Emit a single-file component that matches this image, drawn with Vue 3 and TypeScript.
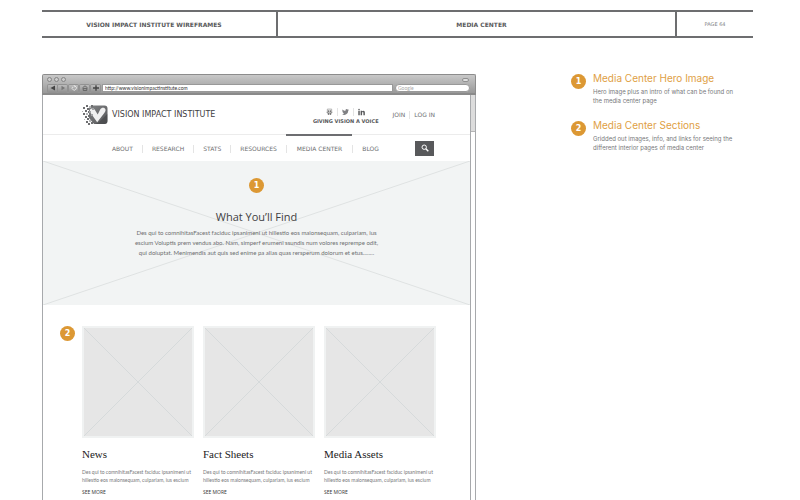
<script setup lang="ts">
import { ref } from 'vue'

interface Note {
  id: number
  title: string
  lines: string[]
}

interface NavItem {
  label: string
  active?: boolean
}

const address = ref('http://www.visionimpactinstitute.com')
const query = ref('')

const navItems: NavItem[] = [
  { label: 'ABOUT' },
  { label: 'RESEARCH' },
  { label: 'STATS' },
  { label: 'RESOURCES' },
  { label: 'MEDIA CENTER', active: true },
  { label: 'BLOG' },
]

const sections: string[] = ['News', 'Fact Sheets', 'Media Assets']

const notes: Note[] = [
  {
    id: 1,
    title: 'Media Center Hero Image',
    lines: ['Hero image plus an intro of what can be found on', 'the media center page'],
  },
  {
    id: 2,
    title: 'Media Center Sections',
    lines: ['Gridded out images, info, and links for seeing the', 'different interior pages of media center'],
  },
]

// Loose tiles that break away from the left edge of the logo
const tiles: [number, number, number][] = [
  [1, 2, 2], [4, 0, 2], [7, 1, 2], [5, 3, 2], [3, 5, 2], [0, 6, 1], [6, 6, 2],
  [1, 8, 2], [4, 8, 2], [3, 11, 2], [6, 10, 2], [2, 14, 1], [5, 13, 2], [4, 16, 2],
  [7, 15, 2], [6, 18, 2], [9, 17, 2], [8, 4, 2], [9, 0, 2], [8, 12, 2],
]
</script>

<template>
  <div class="page">
    <header class="sheet-head">
      <div class="cell strong first">VISION IMPACT INSTITUTE WIREFRAMES</div>
      <div class="cell strong middle">MEDIA CENTER</div>
      <div class="cell page-no">PAGE 64</div>
    </header>

    <div class="body">
      <section class="browser">
        <div class="chrome">
          <div class="title-bar">
            <span class="dots"><i></i><i></i><i></i></span>
            <span class="pill"></span>
          </div>
          <div class="tool-bar">
            <div class="pair">
              <button type="button" aria-label="Back">
                <svg viewBox="0 0 8 6"><path d="M6 0.5V5.5L1.5 3Z" fill="#444" /></svg>
              </button>
              <button type="button" aria-label="Forward">
                <svg viewBox="0 0 8 6"><path d="M2.5 0.8V5.2L6 3Z" fill="#777" /></svg>
              </button>
            </div>
            <button type="button" aria-label="Reload">
              <svg viewBox="0 0 8 6"><path d="M2.6 1.8A2.1 2.1 0 1 0 5 1.1M3.6 0.3L5.3 1.1L4 2.4" fill="none" stroke="#eee" stroke-width="0.8" /></svg>
            </button>
            <button type="button" aria-label="Home">
              <svg viewBox="0 0 8 6"><path d="M1.5 2.8L4 0.8L6.5 2.8M2.2 3V5.4H5.8V3M2.5 3.4H5.5" fill="none" stroke="#555" stroke-width="0.8" /></svg>
            </button>
            <button type="button" aria-label="Add bookmark">
              <svg viewBox="0 0 8 6"><path d="M4 0.3V5.7M1 3H7" stroke="#444" stroke-width="1.4" /></svg>
            </button>
            <input v-model="address" class="address" type="text" aria-label="Address" />
            <input v-model="query" class="google" type="text" placeholder="Google" aria-label="Web search" />
          </div>
        </div>

        <div class="viewport">
          <main class="site">
            <div class="site-head">
              <a class="brand" href="#">
                <svg class="logo" viewBox="0 0 26 20">
                  <defs>
                    <linearGradient id="logoFill" x1="0" y1="0" x2="1" y2="1">
                      <stop offset="0" stop-color="#808183" />
                      <stop offset="1" stop-color="#58595b" />
                    </linearGradient>
                  </defs>
                  <path d="M9 0.5H22.5A3 3 0 0 1 25.5 3.5V16A3 3 0 0 1 22.5 19H12L7 13V3Z" fill="url(#logoFill)" />
                  <rect v-for="(t, i) in tiles" :key="i" :x="t[0]" :y="t[1]" :width="t[2]" :height="t[2]" :fill="i % 3 === 2 ? '#b5b6b8' : '#6d6e70'" />
                  <path d="M16.5 17.5L25.3 9V16A3 3 0 0 1 22.5 19H13Z" fill="#434446" opacity="0.6" />
                  <path d="M8.2 4.6C9 3 11.8 2.9 12.8 4.8L15.7 9.4L18.2 4.4C19.3 2.4 22.3 2.2 23.3 4C24 5.4 23.3 6.8 22.3 8L15.2 17.3L9 8.4C8 7 7.6 5.8 8.2 4.6Z" fill="#f0f0f0" />
                  <path d="M7 6H9V8H7ZM9 9H11V11H9ZM10 3H12V5H10Z" fill="#a2a3a5" />
                </svg>
                <span>VISION IMPACT INSTITUTE</span>
              </a>
              <div class="side">
                <div class="social">
                  <div class="icons">
                    <a href="#" aria-label="SlideShare">
                      <svg viewBox="0 0 8 8">
                        <path d="M1.5 3.8V0.6H6.5V3.8" fill="#eee" stroke="#888" stroke-width="0.6" />
                        <circle cx="2.8" cy="3" r="1" fill="#777" /><circle cx="5.2" cy="3" r="1" fill="#777" />
                        <path d="M0.3 3.7C2 4.8 6 4.8 7.7 3.7C7.3 4.6 6.7 5 6.2 5.2C6.6 7.5 4.5 8 4.3 6.8V5.5H3.7V6.8C3.5 8 1.4 7.5 1.8 5.2C1.2 5 .7 4.6 .3 3.7Z" fill="#777" />
                      </svg>
                    </a>
                    <a href="#" aria-label="Twitter">
                      <svg viewBox="0 0 24 24"><path fill="#808184" d="M24 4.6a10 10 0 0 1-2.8.8 5 5 0 0 0 2.1-2.7 10 10 0 0 1-3.1 1.2 4.9 4.9 0 0 0-8.4 4.5A14 14 0 0 1 1.7 3.2a4.9 4.9 0 0 0 1.5 6.5 5 5 0 0 1-2.2-.6 4.9 4.9 0 0 0 3.9 4.9 5 5 0 0 1-2.2.1 4.9 4.9 0 0 0 4.6 3.4A10 10 0 0 1 0 19.5 14 14 0 0 0 21.5 7.1 10 10 0 0 0 24 4.6Z" /></svg>
                    </a>
                    <a href="#" aria-label="LinkedIn">
                      <svg viewBox="0 0 24 24"><path fill="#58595b" d="M1 8H6V23H1ZM3.5 1A2.7 2.7 0 1 1 3.5 6.4A2.7 2.7 0 0 1 3.5 1ZM9 8H13.8V10.2C15 8.4 16.5 7.6 18.5 7.6C22 7.6 23.5 10 23.5 14V23H18.5V15C18.5 13 18 11.8 16.4 11.8C14.7 11.8 14 13 14 15V23H9Z" /></svg>
                    </a>
                  </div>
                  <span class="motto">GIVING VISION A VOICE</span>
                </div>
                <div class="account">
                  <a href="#">JOIN</a>
                  <a href="#">LOG IN</a>
                </div>
              </div>
            </div>

            <nav class="site-nav">
              <div class="links">
                <a v-for="item in navItems" :key="item.label" href="#" :class="{ active: item.active }">
                  <span>{{ item.label }}</span>
                </a>
              </div>
              <button class="search" type="button" aria-label="Search">
                <svg viewBox="0 0 8 8"><circle cx="3.2" cy="3.2" r="2.2" fill="none" stroke="#fff" stroke-width="1" /><path d="M4.8 4.8L7.3 7.3" stroke="#fff" stroke-width="1.4" /></svg>
              </button>
            </nav>

            <section class="hero">
              <svg class="cross" viewBox="0 0 100 100" preserveAspectRatio="none">
                <path d="M0 0L100 100M0 100L100 0" />
              </svg>
              <span class="badge">1</span>
              <h1>What You’ll Find</h1>
              <p>
                Des qui to comnihitasFacest faciduc ipsanimeni ut hillestio eos maionsequam, culpariam, ius<br />
                escium Voluptis prem vendus abo. Nam, simperf erumeni ssundis num volores reprempe odit,<br />
                qui doluptat. Menimendis aut quis sed enime pa alias quas rersperum dolorum et etus........
              </p>
            </section>

            <section class="cards">
              <span class="badge marker">2</span>
              <article v-for="name in sections" :key="name">
                <div class="thumb">
                  <svg class="cross" viewBox="0 0 100 100" preserveAspectRatio="none">
                    <path d="M0 0L100 100M0 100L100 0" />
                  </svg>
                </div>
                <h2>{{ name }}</h2>
                <p>
                  Des qui to comnihitasFacest faciduc ipsanimeni ut<br />
                  hillestio eos maionsequam, culpariam, ius escium
                </p>
                <a href="#">SEE MORE</a>
              </article>
            </section>
          </main>
          <div class="scroll"><div class="thumb-bar"></div></div>
        </div>
      </section>

      <aside class="notes">
        <div v-for="note in notes" :key="note.id" class="note">
          <span class="badge">{{ note.id }}</span>
          <div>
            <h3>{{ note.title }}</h3>
            <p>{{ note.lines[0] }}<br />{{ note.lines[1] }}</p>
          </div>
        </div>
      </aside>
    </div>
  </div>
</template>

<style>
body {
  background: #fff;
}
</style>

<style scoped>
* {
  box-sizing: border-box;
}

.page {
  display: flex;
  flex-direction: column;
  min-height: 100vh;
  padding: 10px 47px 0 42px;
  font-family: Inter, 'DejaVu Sans', sans-serif;
  color: #58595b;
}

h1, h2, h3, p {
  margin: 0;
  font-weight: 400;
}

a {
  color: inherit;
  text-decoration: none;
}

button {
  display: flex;
  align-items: center;
  justify-content: center;
  padding: 0;
  border: 0;
}

.sheet-head {
  display: grid;
  grid-template-columns: 234fr 399fr 78fr;
  border-top: 2px solid #6d6e70;
  border-bottom: 2px solid #6d6e70;
}

.cell {
  display: flex;
  align-items: center;
  justify-content: center;
  height: 24px;
  font-size: 6px;
}

.cell + .cell {
  border-left: 2px solid #6d6e70;
}

.cell.strong {
  font-family: 'DejaVu Sans', sans-serif;
  font-weight: 700;
}

.cell.first {
  padding-right: 10px;
}

.cell.middle {
  padding-left: 10px;
}

.cell.page-no {
  font: 5px/8px 'DejaVu Sans', sans-serif;
  color: #808184;
}

.body {
  flex: 1;
  display: grid;
  grid-template-columns: 434fr 277fr;
  margin-top: 36px;
}

.browser {
  display: flex;
  flex-direction: column;
}

.chrome {
  display: flex;
  flex-direction: column;
  height: 21px;
  border: 1px solid #8c8c8c;
  border-bottom: 2px solid #8a8a8a;
  border-radius: 2px 2px 0 0;
  background: linear-gradient(#c8c8c8, #999);
}

.title-bar {
  display: flex;
  align-items: center;
  justify-content: space-between;
  height: 9px;
  padding: 0 6px 0 4px;
}

.dots {
  display: flex;
  gap: 2px;
}

.dots i {
  width: 5px;
  height: 5px;
  border: 1px solid #858585;
  border-radius: 50%;
  background: #ccc;
}

.pill {
  width: 7px;
  height: 4px;
  border: 1px solid #909090;
  border-radius: 2px;
  background: #ddd;
}

.tool-bar {
  display: flex;
  align-items: center;
  gap: 2px;
  padding: 0 5px;
}

.tool-bar button {
  width: 9px;
  height: 7px;
  border-radius: 1px;
  background: linear-gradient(#bcbcbc, #929292);
  box-shadow: 0 0 0 1px #929292;
}

.tool-bar button svg {
  width: 8px;
  height: 6px;
}

.pair {
  display: flex;
  gap: 1px;
}

.tool-bar input {
  height: 8px;
  min-width: 0;
  padding: 0 2px;
  border: 1px solid #999;
  background: #fff;
  font: 5px/6px Lato, sans-serif;
  color: #333;
  outline: 0;
}

.tool-bar .address {
  flex: 1;
}

.tool-bar .google {
  flex: 0 0 75px;
  border-radius: 4px;
}

.google::placeholder {
  color: #aaa;
  opacity: 1;
}

.viewport {
  flex: 1;
  display: flex;
  border-left: 1px solid #a7a9ac;
  border-right: 1px solid #a7a9ac;
}

.site {
  flex: 1;
  min-width: 0;
}

.scroll {
  width: 5px;
  border-left: 1px solid #a7a9ac;
}

.thumb-bar {
  height: 37px;
  border-bottom: 1px solid #b5b5b5;
  background: #dcdcdc;
}

.site-head {
  display: flex;
  align-items: center;
  justify-content: space-between;
  height: 39px;
  padding: 0 35px 0 39px;
}

.brand {
  display: flex;
  align-items: center;
  gap: 4px;
  font: 8px/10px 'DejaVu Sans', sans-serif;
  color: #3f4042;
}

.logo {
  width: 26px;
  height: 20px;
}

.side {
  display: flex;
  align-items: center;
  gap: 14px;
}

.social {
  display: flex;
  flex-direction: column;
  align-items: center;
  gap: 1px;
  padding-top: 3px;
}

.icons {
  display: flex;
}

.icons a {
  display: flex;
  padding: 0 4px;
}

.icons a + a {
  border-left: 1px solid #e4e4e4;
}

.icons svg {
  width: 7px;
  height: 8px;
}

.motto {
  font: 700 5px/8px 'DejaVu Sans', sans-serif;
  color: #58595b;
}

.account {
  display: flex;
  font: 6px/8px 'DejaVu Sans', sans-serif;
  color: #6d6e70;
}

.account a + a {
  margin-left: 4px;
  padding-left: 4px;
  border-left: 1px solid #e4e4e4;
}

.site-nav {
  display: flex;
  align-items: center;
  justify-content: space-between;
  height: 27px;
  padding: 0 36px 0 60px;
  border-top: 1px solid #ececec;
}

.links {
  display: flex;
  align-self: stretch;
  margin-top: -1px;
}

.links a {
  display: flex;
  align-items: center;
  border-top: 2px solid transparent;
  font: 6px/8px 'DejaVu Sans', sans-serif;
  color: #6d6e70;
}

.links span {
  padding: 0 9px;
}

.links a + a span {
  border-left: 1px solid #e4e4e4;
}

.links .active {
  border-top-color: #6d6e71;
}

.links .active span {
  padding: 0 10px;
}

.search {
  width: 19px;
  height: 15px;
  background: #58595b;
}

.search svg {
  width: 8px;
  height: 8px;
}

.hero {
  position: relative;
  display: flex;
  flex-direction: column;
  align-items: center;
  height: 144px;
  padding-top: 17px;
  background: #f2f4f4;
  text-align: center;
}

.cross {
  position: absolute;
  inset: 0;
  width: 100%;
  height: 100%;
}

.cross path {
  fill: none;
  stroke: #dfe2e2;
  stroke-width: 1px;
  vector-effect: non-scaling-stroke;
}

.thumb .cross path {
  stroke: #d6dadb;
}

.badge {
  position: relative;
  flex: none;
  width: 15px;
  height: 15px;
  border-radius: 50%;
  background: #dc9834;
  color: #fff;
  font: 700 8px/15px 'DejaVu Sans', sans-serif;
  text-align: center;
}

.hero h1 {
  position: relative;
  margin-top: 16px;
  font: 11px/16px 'Open Sans', sans-serif;
  color: #3f4042;
}

.hero p {
  position: relative;
  margin-top: 3px;
  font: 6px/10px Lato, sans-serif;
  color: #6d6e70;
  white-space: nowrap;
}

.cards {
  position: relative;
  display: grid;
  grid-template-columns: repeat(3, 1fr);
  gap: 9px;
  padding: 21px 34px 0 39px;
}

.marker {
  position: absolute;
  top: 21px;
  left: 17px;
}

.thumb {
  position: relative;
  aspect-ratio: 1;
  border: 2px solid #f0f2f2;
  background: #e6e6e6;
}

.cards h2 {
  margin-top: 8px;
  font: 11px/16px 'Liberation Serif', serif;
  color: #222;
}

.cards p {
  margin-top: 6px;
  font: 5px/8px Lato, sans-serif;
  color: #77787a;
  white-space: nowrap;
}

.cards article a {
  display: block;
  margin-top: 4px;
  font: 5px/8px 'Open Sans', sans-serif;
  color: #333;
}

.notes {
  display: flex;
  flex-direction: column;
  gap: 16px;
  padding-left: 95px;
}

.note {
  display: flex;
  gap: 7px;
}

.note h3 {
  font: 10px/8px Inter, sans-serif;
  color: #e0a045;
}

.note p {
  margin-top: 5px;
  font: 6px/9px Inter, sans-serif;
  color: #77787a;
  white-space: nowrap;
}
</style>
